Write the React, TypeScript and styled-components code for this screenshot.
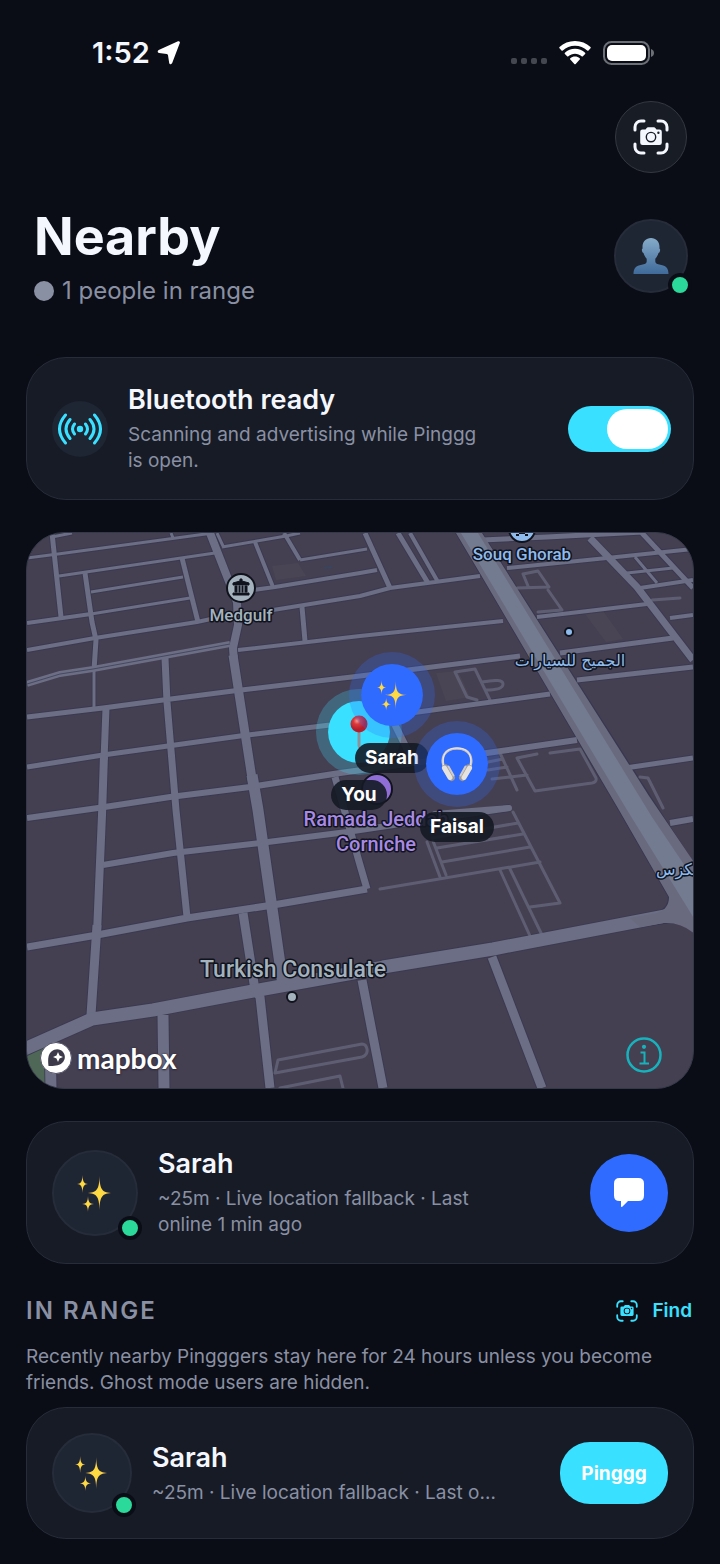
import React, { useState } from 'react';
import styled, { createGlobalStyle, css } from 'styled-components';

const c = {
  page: '#0a0d15',
  card: '#161b26',
  line: '#262c39',
  bubble: '#1e2533',
  text: '#f5f7ff',
  muted: '#8a90a3',
  cyan: '#3ae0ff',
  blue: '#2f6bff',
  green: '#2bd99b',
};

const GlobalStyle = createGlobalStyle`
  *, *::before, *::after { box-sizing: border-box; }
  body {
    margin: 0;
    background: ${c.page};
    color: ${c.text};
    font-family: Inter, 'Liberation Sans', sans-serif;
    -webkit-font-smoothing: antialiased;
  }
  h1, h2, h3, p { margin: 0; }
  button { font: inherit; color: inherit; border: 0; padding: 0; cursor: pointer; }
`;

const Screen = styled.main`
  min-height: 100vh;
  padding: 0 26px 25px;
  background: ${c.page};
`;

const StatusBar = styled.div`
  display: flex;
  justify-content: space-between;
  align-items: center;
  height: 101px;
  padding: 5px 40px 0 66px;
`;

const StatusGroup = styled.div<{ $gap: number }>`
  display: flex;
  align-items: center;
  gap: ${(p) => p.$gap}px;
  font-size: 29px;
  font-weight: 600;
  line-height: 36px;
`;

const Toolbar = styled.nav`
  display: flex;
  justify-content: flex-end;
  padding: 0 7px;
`;

const ScanButton = styled.button`
  display: grid;
  place-items: center;
  width: 72px;
  height: 72px;
  border-radius: 50%;
  background: #181c25;
  border: 1px solid #343842;
`;

const Header = styled.header`
  display: flex;
  justify-content: space-between;
  align-items: center;
  margin: 32px 0 51px;
  padding: 0 6px 0 8px;
`;

const PageTitle = styled.h1`
  font-size: 52px;
  font-weight: 700;
  line-height: 64px;
`;

const Subtitle = styled.p`
  display: flex;
  align-items: center;
  gap: 8px;
  margin-top: 7px;
  color: ${c.muted};
  font-size: 24px;
  line-height: 30px;

  &::before {
    content: '';
    width: 20px;
    height: 20px;
    border-radius: 50%;
    background: currentColor;
  }
`;

const AvatarCircle = styled.div<{ $size: number }>`
  position: relative;
  display: grid;
  place-items: center;
  flex: none;
  width: ${(p) => p.$size}px;
  height: ${(p) => p.$size}px;
  border-radius: 50%;
  background: ${c.bubble};
  border: 2px solid ${c.line};
`;

const OnlineDot = styled.span`
  position: absolute;
  right: -6px;
  bottom: -6px;
  width: 24px;
  height: 24px;
  border-radius: 50%;
  background: ${c.green};
  border: 4px solid ${c.page};
`;

const Stack = styled.div`
  display: flex;
  flex-direction: column;
  gap: 32px;
`;

const Card = styled.section<{ $end?: number }>`
  display: flex;
  align-items: center;
  gap: 20px;
  padding: 25px ${(p) => p.$end ?? 25}px 25px 25px;
  border: 1px solid ${c.line};
  border-radius: 40px;
  background: ${c.card};
`;

const CardBody = styled.div`
  flex: 1;
  min-width: 0;
`;

const CardTitle = styled.h3`
  display: block;
  color: ${c.text};
  font-size: 27px;
  font-weight: 600;
  line-height: 34px;
`;

const CardText = styled.p<{ $truncate?: boolean }>`
  max-width: 364px;
  margin-top: 5px;
  color: ${c.muted};
  font-size: 19px;
  line-height: 26px;
  ${(p) =>
    p.$truncate &&
    css`
      max-width: 350px;
      overflow: hidden;
      white-space: nowrap;
      text-overflow: ellipsis;
    `}
`;

const SignalBubble = styled.div`
  display: grid;
  place-items: center;
  flex: none;
  width: 56px;
  height: 56px;
  border-radius: 50%;
  background: ${c.bubble};
`;

const Switch = styled.input`
  appearance: none;
  flex: none;
  width: 103px;
  height: 46px;
  margin: 0;
  padding: 3px;
  border-radius: 23px;
  background: #3a4150;
  cursor: pointer;

  &::before {
    content: '';
    display: block;
    width: 61px;
    height: 40px;
    border-radius: 20px;
    background: #fff;
  }
  &:checked { background: ${c.cyan}; }
  &:checked::before { margin-left: auto; }
`;

const MessageButton = styled.button`
  display: grid;
  place-items: center;
  flex: none;
  width: 78px;
  height: 78px;
  border-radius: 50%;
  background: ${c.blue};
`;

const PingButton = styled.button`
  flex: none;
  width: 108px;
  height: 62px;
  border-radius: 30px;
  background: ${c.cyan};
  color: #fff;
  font-size: 19px;
  font-weight: 700;
`;

const MapPanel = styled.section`
  position: relative;
  aspect-ratio: 668 / 557;
  overflow: hidden;
  border: 1px solid #333949;
  border-radius: 38px;
  background: #453f52;
`;

const MapArt = styled.svg`
  display: block;
  width: 100%;
  height: 100%;
`;

const Pin = styled.div<{ $x: number; $y: number }>`
  position: absolute;
  left: calc(100% * ${(p) => p.$x} / 666);
  top: calc(100% * ${(p) => p.$y} / 555);
  display: flex;
  flex-direction: column;
  align-items: center;
  gap: 5px;
  transform: translate(-50%, -43px);
`;

const PinCircle = styled.div<{ $color: string; $halo: string }>`
  display: grid;
  place-items: center;
  width: 86px;
  height: 86px;
  border: 12px solid ${(p) => p.$halo};
  border-radius: 50%;
  background: ${(p) => p.$color};
  background-clip: padding-box;
`;

const PinLabel = styled.span`
  padding: 0 10px;
  border-radius: 15px;
  background: rgba(20, 26, 36, 0.9);
  color: #fff;
  font-size: 19px;
  font-weight: 700;
  line-height: 30px;
`;

const MapBrand = styled.a`
  position: absolute;
  left: 13px;
  bottom: 13px;
  display: flex;
  align-items: center;
  gap: 5px;
  color: #fff;
  font-family: Lato, sans-serif;
  font-size: 28px;
  font-weight: 700;
  line-height: 34px;
  text-decoration: none;
  text-shadow: 0 0 2px #2b2a38, 0 1px 2px #2b2a38;
`;

const InfoButton = styled.button`
  position: absolute;
  right: 30px;
  bottom: 14px;
  width: 38px;
  height: 38px;
  background: none;
`;

const SectionHead = styled.div`
  display: flex;
  justify-content: space-between;
  align-items: center;
`;

const SectionTitle = styled.h2`
  color: ${c.muted};
  font-size: 24px;
  font-weight: 600;
  line-height: 30px;
  letter-spacing: 2px;
`;

const FindButton = styled.button`
  display: flex;
  align-items: center;
  gap: 14px;
  padding: 0 2px;
  background: none;
  color: ${c.cyan};
  font-size: 19px;
  font-weight: 600;
  line-height: 30px;
`;

const SectionText = styled.p`
  margin: 18px 0 11px;
  color: ${c.muted};
  font-size: 19px;
  line-height: 26px;
`;

const ScanCamera = ({ size }: { size: number }) => (
  <svg width={size} height={size} viewBox="0 0 36 36" fill="none" aria-hidden="true">
    <path
      d="M2 11V8a6 6 0 0 1 6-6h3M25 2h3a6 6 0 0 1 6 6v3M34 25v3a6 6 0 0 1-6 6h-3M11 34H8a6 6 0 0 1-6-6v-3"
      stroke="currentColor"
      strokeWidth="3"
      strokeLinecap="round"
    />
    <path
      fillRule="evenodd"
      fill="currentColor"
      d="M9.500 10.500h3l1.200-1.600q.5-.7 1.300-.7h6q.8 0 1.300.7l1.200 1.600h3q2.300 0 2.300 2.300v10.900q0 2.300-2.300 2.300h-17q-2.300 0-2.300-2.300V12.800q0-2.300 2.300-2.300zM18 12.700a5.400 5.400 0 1 0 0 10.800a5.400 5.400 0 1 0 0-10.800zM25.400 12.600a1.200 1.200 0 1 0 0 2.400a1.200 1.200 0 1 0 0-2.400z"
    />
    <circle cx="18" cy="18.100" r="4" fill="currentColor" />
  </svg>
);

const Sparkles = ({ size }: { size: number }) => (
  <svg width={size} height={size} viewBox="0 0 36 36" overflow="visible" aria-hidden="true">
    <defs>
      <radialGradient id="spark">
        <stop offset="0" stopColor="#ffdf3c" />
        <stop offset="0.5" stopColor="#fbd04a" />
        <stop offset="1" stopColor="#d99b4a" />
      </radialGradient>
    </defs>
    <g fill="url(#spark)">
      <path d="M22.500 1C22.900 15 25 17.600 36 18C25 18.400 22.900 21 22.500 35C22.100 21 20 18.400 9 18C20 17.600 22.100 15 22.500 1z" />
      <path d="M5.500 0C5.800 7 7 8.700 11 9C7 9.300 5.800 11 5.500 18C5.200 11 4 9.300 0 9C4 8.700 5.200 7 5.500 0z" />
      <path d="M11 21C11.300 27 12.500 28.700 17 29C12.500 29.300 11.300 31 11 37C10.700 31 9.500 29.300 5 29C9.500 28.700 10.700 27 11 21z" />
    </g>
  </svg>
);

const Bust = () => (
  <svg width="36" height="37" viewBox="0 0 36 37" aria-hidden="true">
    <defs>
      <linearGradient id="bust" x1="0" y1="0" x2="0" y2="1">
        <stop offset="0" stopColor="#86abc9" />
        <stop offset="1" stopColor="#3f6a9a" />
      </linearGradient>
    </defs>
    <path
      fill="url(#bust)"
      d="M18 1c5 0 8.500 3.600 8.500 8.800q0 .9-.1 1.700c.9.200.9 1.500.5 2.700-.3 1-.8 1.700-1.400 1.700-.6 2.400-1.800 4.400-3.200 5.800v2.800c0 2 2 2.700 5 3.200 5.700.9 8.200 3.300 8.200 9.300H.5c0-6 2.500-8.400 8.200-9.300 3-.5 5-1.200 5-3.200v-2.800c-1.400-1.400-2.600-3.400-3.200-5.800-.6 0-1.100-.7-1.400-1.700-.4-1.200-.4-2.500.5-2.700q-.1-.8-.1-1.700C9.500 4.600 13 1 18 1z"
    />
  </svg>
);

const Headphones = () => (
  <svg width="34" height="36" viewBox="0 0 34 36" fill="none" aria-hidden="true">
    <path d="M4 21C1 13 3 2.500 17 2.500S33 13 30 21" stroke="#c9c4c2" strokeWidth="2.500" />
    <path d="M3.500 19C2 12 4 2 17 2S32 12 30.500 19" stroke="#eeeae8" strokeWidth="1" />
    <g strokeLinecap="round">
      <path d="M5.500 22l6 9.500" stroke="#9e9896" strokeWidth="7" />
      <path d="M28.500 22l-6 9.500" stroke="#9e9896" strokeWidth="7" />
      <path d="M4.500 22l5.500 9.500" stroke="#e6e2e0" strokeWidth="5" />
      <path d="M29.500 22l-5.500 9.500" stroke="#e6e2e0" strokeWidth="5" />
      <path d="M8.500 20.500l5 9M25.500 20.500l-5 9" stroke="#d0cbc8" strokeWidth="2" />
    </g>
  </svg>
);

const Pushpin = () => (
  <svg width="18" height="36" viewBox="0 0 18 36" aria-hidden="true">
    <defs>
      <radialGradient id="pinhead" cx="0.38" cy="0.32">
        <stop offset="0" stopColor="#f39a92" />
        <stop offset="0.4" stopColor="#dc3a3c" />
        <stop offset="1" stopColor="#b41e2c" />
      </radialGradient>
    </defs>
    <path d="M7.500 15h3v17l-1.500 3-1.500-3z" fill="#8d9299" />
    <circle cx="9" cy="10" r="8.500" fill="url(#pinhead)" />
  </svg>
);

const Signal = () => (
  <svg width="46" height="32" viewBox="0 0 46 32" fill="none" stroke={c.cyan} strokeWidth="3" strokeLinecap="round" aria-hidden="true">
    <circle cx="23" cy="16" r="3.200" fill={c.cyan} stroke="none" />
    <path d="M17.500 11Q13.500 16 17.500 21M28.500 11Q32.500 16 28.500 21M13 6.500Q5 16 13 25.500M33 6.500Q41 16 33 25.500M8.500 2Q-3.500 16 8.500 30M37.500 2Q49.500 16 37.500 30" />
  </svg>
);

const Arrow = () => (
  <svg width="24" height="24" viewBox="0 0 24 24" aria-hidden="true">
    <path
      d="M21 .3C22.200-.2 23.300.9 22.800 2.100L15.200 22.100c-.6 1.600-2.700 1.500-3-.2l-1.200-7.600c-.1-.8-.5-1.200-1.300-1.300l-7.600-1c-1.700-.2-1.900-2.300-.4-3z"
      fill="#fff"
    />
  </svg>
);

const Wifi = () => (
  <svg width="32" height="24" viewBox="0 0 32 24" fill="#fff" aria-hidden="true">
    <path d="M16 0c6 0 11.400 2.300 15.500 6 .4.400.4.900 0 1.300l-2 2.100c-.4.400-.9.400-1.300 0C24.900 6.500 20.700 4.700 16 4.700S7.100 6.500 3.800 9.400c-.4.400-.9.400-1.300 0l-2-2.100c-.4-.4-.4-.9 0-1.300C4.600 2.300 10 0 16 0z" />
    <path d="M16 7.800c3.900 0 7.400 1.500 10.100 3.900.4.400.4.900 0 1.300l-2.200 2.200c-.4.400-.8.400-1.300 0-1.800-1.500-4.100-2.500-6.600-2.500s-4.800 1-6.600 2.500c-.5.400-.9.400-1.300 0L5.900 13c-.4-.4-.4-.9 0-1.300C8.600 9.300 12.100 7.800 16 7.800z" />
    <path d="M16 15.600c1.800 0 3.400.7 4.700 1.700.5.400.5.900 0 1.300l-4 4.400c-.4.400-1 .4-1.400 0l-4-4.400c-.5-.4-.5-.9 0-1.300 1.300-1 2.900-1.700 4.700-1.700z" />
  </svg>
);

const Battery = () => (
  <svg width="51" height="24" viewBox="0 0 51 24" aria-hidden="true">
    <rect x="1" y="1" width="45" height="22" rx="7.500" fill="none" stroke="#6c6f76" strokeWidth="2" />
    <rect x="4" y="4" width="39" height="16" rx="5" fill="#fff" />
    <path d="M48 8q3 1.200 3 4t-3 4z" fill="#6c6f76" />
  </svg>
);

const CellDots = () => (
  <svg width="36" height="24" viewBox="0 0 36 24" fill="#44474f" aria-hidden="true">
    {[0, 10, 20, 30].map((x) => (
      <rect key={x} x={x} y="17" width="6" height="6" rx="2" />
    ))}
  </svg>
);

const ChatBubble = () => (
  <svg width="32" height="30" viewBox="0 0 32 30" aria-hidden="true">
    <path
      d="M6.500 0h19Q31 0 31 5.500v12q0 5.500-5.500 5.500H15l-5.500 5.500q-1.500 1.300-1.500-.7V23H6.500Q1 23 1 17.500v-12Q1 0 6.500 0z"
      fill="#fff"
    />
  </svg>
);

/* Street centre lines grouped by drawn width. */
const streets: Array<[number, string]> = [
  [3, 'M52 537L72 533M27 558L58 554L213 533M59 576L215 553M222 547L286 536L300 533M91 592L183 577M91 614L190 598M217 533L223 546M171 533L173 538M300 560L367 549M627 573L673 568M635 557L657 583M94 668L94 708'],
  [4, 'M27 623L91 614M27 650L95 638L197 622L234 614M273 610L360 596L390 588L480 576M253 590L275 587L360 573L377 570M255 542L273 587M284 533L300 560M410 533L438 582M238 650L360 636L503 621M507 568L607 558L693 549M640 588L693 580M537 617L647 604M670 618L693 615'],
  [5, 'M52 533L61 617M85 573L92 622L96 640L94 670M182 558L198 622M302 607L305 641M365 533L390 588M398 533L428 583M642 533L693 588M482 540L547 537L643 532M27 717L103 708L163 700L233 691L360 676L520 656M560 653L673 638M577 680L693 667M27 767L103 755L240 736L330 725L418 712L550 694M605 771L693 758'],
  [6, 'M27 818L98 808L170 797L250 787L340 773L487 753L577 740M103 865L173 853L260 843L347 832L420 821L510 808M670 823L693 819'],
  [7, 'M165 658L167 702L176 810L187 917M27 947L97 935L187 918L273 905L367 889M335 777L360 865L367 889M590 538L637 587L693 660M395 725L410 755M106 708L104 760'],
  [8, 'M104 755L102 815L97 933M210 533L237 602L238 625L233 648L234 662'],
  [9, 'M97 925L91 1015M233 655L253 785M243 913L255 990L260 997L270 1088M492 957L542 1088M362 980L383 1088'],
  [11, 'M252 775L258 810L283 985M163 1015L164 1088M50 1040L51 1088'],
  [13, 'M20 1051L92 1019L153 1010L253 991L353 973L383 967L493 949L660 917L693 910'],
];

const lanes =
  'M523 574L538 571L549 587L517 588M523 574L528 586M548 590L562 610L538 612M652 600L680 598M455 672L475 669L490 700M455 672L467 697L477 700M482 682Q503 678 503 684Q503 690 486 690M517 758L537 754M550 753L580 749L596 778Q597 782 592 783L535 791L517 758M500 753L517 790M488 762L503 759M488 770L507 767M492 779L527 775M380 889L540 862M427 842L440 877M433 841L446 875M513 812L560 903L530 907M500 870L530 936M510 869L542 935M437 848L523 834M442 862L530 847M432 838L518 823M275 1073L278 1060L362 1044Q366 1044 367 1049Q368 1055 362 1057L275 1073M280 1088L340 1076L343 1088M640 777L648 778L663 808';

const StreetMap = () => (
  <MapArt viewBox="27 533 666 555" preserveAspectRatio="xMidYMid slice" role="img" aria-label="Street map">
    <path d="M436 673l22-2 12 26-24 4zM585 614l18-3 20 28-17 3zM272 566l26-3 8 13-30 4z" fill="#4a4554" />
    <path d="M27 1056q12-6 20-10v42q-16-8-20-30z" fill="#4f6756" />
    <g fill="none" stroke="#363850" strokeLinejoin="round">
      {streets.map(([w, d]) => (
        <path key={w} d={d} strokeWidth={w + 2} strokeOpacity="0.7" />
      ))}
    </g>
    <path d="M455 533h28L650 795L700 872V930Q680 922 664 924L640 927L630 917L657 912Q668 908 668 897L618 810L480 575z" fill="#363850" />
    <path d={lanes} fill="none" stroke="#5e5e72" strokeWidth="3" strokeLinejoin="round" strokeLinecap="round" />
    <g fill="none" stroke="#6b6e84" strokeLinejoin="round">
      {streets.map(([w, d]) => (
        <path key={w} d={d} strokeWidth={w} />
      ))}
    </g>
    <path d="M456 533h26L649 796L700 871V940Q686 922 664 923L640 927L630 918L657 913Q669 909 669 897L619 810L481 575z" fill="#6a6a7f" />
    <path d="M461 533h17L652 817L700 888V928L627 810z" fill="#727b90" />
    <path d="M27 684L60 674L93 669L230 644" fill="none" stroke="#6b6e84" strokeWidth="6" />
    <path d="M27 684L60 674L93 669L230 644" fill="none" stroke="#474861" strokeWidth="1" />
    <path d="M435 814L509 808" stroke="#6b6e84" strokeWidth="6" strokeLinecap="round" />
    <path d="M324 568l8-1" stroke="#38455f" strokeWidth="2" />

    <g stroke="#10131c" strokeWidth="2">
      <circle cx="241" cy="588" r="14" fill="#a3b2bd" />
      <circle cx="522" cy="529" r="13" fill="#8ebbee" />
      <circle cx="377" cy="789" r="15" fill="#8f6fd6" />
      <circle cx="569" cy="632" r="4" fill="#8ebbee" />
      <circle cx="292" cy="997" r="5" fill="#a3b2bd" />
    </g>
    <path d="M233 595h16v-2h-16zM235 586h2v6h-2zM239 586h1v6h-1zM242 586h1v6h-1zM245 586h2v6h-2zM233 585v-2l7-2v-2h2v2l7 2v2z" fill="#10131c" stroke="#10131c" strokeWidth="1" />
    <path d="M516 533v3h3v-3zM525 533v3h3v-3zM516 532h12v2h-12z" fill="#10131c" />

    <g fontFamily="Roboto, sans-serif" fontWeight="500" textAnchor="middle" stroke="#10131c" strokeWidth="3" strokeLinejoin="round" paintOrder="stroke">
      <text x="241" y="621" fontSize="17" fill="#a3b2bd">Medgulf</text>
      <text x="522" y="560" fontSize="17" fill="#8ebbee">Souq Ghorab</text>
      <text x="293" y="977" fontSize="23" fill="#a3b2bd">Turkish Consulate</text>
      <g fill="#a88ae6" fontSize="20">
        <text x="376" y="826">Ramada Jeddah</text>
        <text x="376" y="851">Corniche</text>
      </g>
      <g fill="#8ebbee" fontFamily="'DejaVu Sans', sans-serif" fontSize="16" fontWeight="400">
        <text x="570" y="666">الجميح للسيارات</text>
        <text x="677" y="875">لكزس</text>
      </g>
    </g>
  </MapArt>
);

const people = [
  { name: 'You', x: 332, y: 199, color: c.cyan, halo: 'rgba(58, 224, 255, 0.25)', icon: <Pushpin /> },
  { name: 'Sarah', x: 365, y: 162, color: c.blue, halo: 'rgba(47, 107, 255, 0.25)', icon: <Sparkles size={30} /> },
  { name: 'Faisal', x: 430, y: 231, color: c.blue, halo: 'rgba(47, 107, 255, 0.25)', icon: <Headphones /> },
];

const detail = '~25m · Live location fallback · Last online 1 min ago';

export default function App() {
  const [ready, setReady] = useState(true);

  return (
    <>
      <GlobalStyle />
      <Screen>
        <StatusBar>
          <StatusGroup $gap={7}>
            <span>1:52</span>
            <Arrow />
          </StatusGroup>
          <StatusGroup $gap={12}>
            <CellDots />
            <Wifi />
            <Battery />
          </StatusGroup>
        </StatusBar>

        <Toolbar>
          <ScanButton type="button" aria-label="Scan">
            <ScanCamera size={36} />
          </ScanButton>
        </Toolbar>

        <Header>
          <div>
            <PageTitle>Nearby</PageTitle>
            <Subtitle>1 people in range</Subtitle>
          </div>
          <AvatarCircle $size={74}>
            <Bust />
            <OnlineDot />
          </AvatarCircle>
        </Header>

        <Stack>
          <Card $end={22}>
            <SignalBubble>
              <Signal />
            </SignalBubble>
            <CardBody>
              <CardTitle as="label" htmlFor="bluetooth">Bluetooth ready</CardTitle>
              <CardText>Scanning and advertising while Pinggg is open.</CardText>
            </CardBody>
            <Switch
              id="bluetooth"
              type="checkbox"
              role="switch"
              checked={ready}
              onChange={(e) => setReady(e.target.checked)}
            />
          </Card>

          <MapPanel>
            <StreetMap />
            {people.map((p) => (
              <Pin key={p.name} $x={p.x} $y={p.y}>
                <PinCircle $color={p.color} $halo={p.halo}>{p.icon}</PinCircle>
                <PinLabel>{p.name}</PinLabel>
              </Pin>
            ))}
            <MapBrand href="#mapbox">
              <svg width="32" height="32" viewBox="0 0 32 32" aria-hidden="true">
                <circle cx="16" cy="16" r="15.500" fill="#fff" stroke="#55536a" />
                <path d="M8.500 24c-1-8 0-12 3-14.500 4-3.300 9-2.500 11.500.5s2.500 7.500-.5 10.500-7 3.700-14 3.500z" fill="#3d3b4b" />
                <path d="M18 10l1.500 3.500L23 15l-3.500 1.500L18 20l-1.500-3.500L13 15l3.500-1.500z" fill="#fff" />
              </svg>
              mapbox
            </MapBrand>
            <InfoButton type="button" aria-label="Map information">
              <svg width="38" height="38" viewBox="0 0 38 38" fill="none" stroke="#16b3bd" aria-hidden="true">
                <circle cx="19" cy="19" r="16.500" strokeWidth="2.500" />
                <path d="M15.500 16.500h4V27M14.500 27.500h9.500" strokeWidth="2" />
                <circle cx="19" cy="10.800" r="2.100" fill="#16b3bd" stroke="none" />
              </svg>
            </InfoButton>
          </MapPanel>

          <Card>
            <AvatarCircle $size={86}>
              <Sparkles size={36} />
              <OnlineDot />
            </AvatarCircle>
            <CardBody>
              <CardTitle>Sarah</CardTitle>
              <CardText>{detail}</CardText>
            </CardBody>
            <MessageButton type="button" aria-label="Message Sarah">
              <ChatBubble />
            </MessageButton>
          </Card>

          <section>
            <SectionHead>
              <SectionTitle>IN RANGE</SectionTitle>
              <FindButton type="button">
                <ScanCamera size={22} />
                Find
              </FindButton>
            </SectionHead>
            <SectionText>
              Recently nearby Pingggers stay here for 24 hours unless you become friends. Ghost mode users are hidden.
            </SectionText>
            <Card>
              <AvatarCircle $size={80}>
                <Sparkles size={34} />
                <OnlineDot />
              </AvatarCircle>
              <CardBody>
                <CardTitle>Sarah</CardTitle>
                <CardText $truncate>{detail}</CardText>
              </CardBody>
              <PingButton type="button">Pinggg</PingButton>
            </Card>
          </section>
        </Stack>
      </Screen>
    </>
  );
}
